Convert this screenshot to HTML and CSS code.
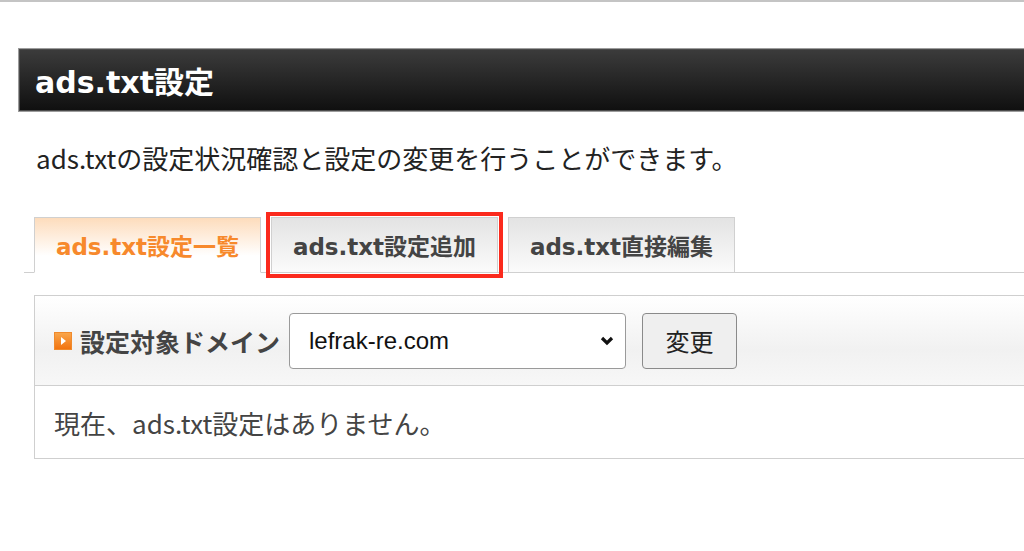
FILE: index.html
```html
<!DOCTYPE html>
<html>
<head lang="ja">
    <meta charset="UTF-8">
    <title>ads.txt設定</title>
    <link rel="stylesheet" href="styles.css">
</head>
<body>
<div class="frame">
    <h1 class="page-title">ads.txt設定</h1>
    <p class="lead">ads.txtの設定状況確認と設定の変更を行うことができます。</p>
    <ul class="tabs">
        <li class="tab active"><a href="javascript:void(0)">ads.txt設定一覧</a></li>
        <li class="tab marked"><a href="javascript:void(0)">ads.txt設定追加</a></li>
        <li class="tab"><a href="javascript:void(0)">ads.txt直接編集</a></li>
    </ul>
    <div class="panel">
        <div class="panel-head">
            <span class="ico"></span>
            <span class="label">設定対象ドメイン</span>
            <div class="select-wrap">
                <select class="domain">
                    <option>lefrak-re.com</option>
                </select>
                <svg class="chevron" width="14" height="10" viewBox="0 0 14 10"><path d="M2 2 L7 7 L12 2" fill="none" stroke="#111" stroke-width="3.2"/></svg>
            </div>
            <button class="btn" type="button">変更</button>
        </div>
        <div class="panel-body">現在、ads.txt設定はありません。</div>
    </div>
</div>
</body>
</html>
```

FILE: styles.css
```css
*{
    margin: 0;
    padding: 0;
    box-sizing: border-box;
}
html, body{
    overflow: hidden;
}
body{
    font-family: "Noto Sans CJK JP", sans-serif;
    color: #222;
    background: #fff;
}
li{
    list-style: none;
}
a{
    text-decoration: none;
}
.frame{
    width: 1040px;
    height: 551px;
    border-top: 2px solid #c4c4c4;
    padding-top: 46px;
}
.page-title{
    margin-left: 18px;
    height: 64px;
    padding-left: 16px;
    display: flex;
    align-items: center;
    border: 1px solid #9c9c9c;
    box-shadow: inset 0 0 0 1px #4a4a4a;
    background: linear-gradient(#3c3c3c, #0f0f0f);
    color: #fff;
    font-family: "DejaVu Sans", "Noto Sans CJK JP", sans-serif;
    font-size: 30px;
    font-weight: bold;
}
.lead{
    margin: 26px 0 0 36px;
    font-size: 26px;
    line-height: 39px;
    color: #222;
}
.tabs{
    margin: 40px 0 0 24px;
    padding-left: 10px;
    display: flex;
    gap: 10px;
    border-bottom: 1px solid #cfcfcf;
}
.tab{
    width: 227px;
    height: 56px;
    margin-bottom: -1px;
    border: 1px solid #d0d0d0;
    background: linear-gradient(#e3e3e3, #fbfbfb);
}
.tab a{
    display: flex;
    height: 100%;
    align-items: center;
    justify-content: center;
    font-family: "DejaVu Sans", "Noto Sans CJK JP", sans-serif;
    font-size: 23px;
    font-weight: bold;
    color: #444;
}
.tab.active{
    border-bottom-color: #fff;
    background: linear-gradient(#fddcbc, #fff 70%);
}
.tab.active a{
    color: #f7892c;
}
.tab.marked{
    outline: 4px solid #fb2a1d;
    outline-offset: 1px;
}
.panel{
    margin: 22px 0 0 34px;
    border: 1px solid #cfcfcf;
}
.panel-head{
    height: 90px;
    padding-left: 19px;
    display: flex;
    align-items: center;
    border-bottom: 1px solid #cfcfcf;
    background: linear-gradient(#fff, #f1f1f1 60%, #f7f7f7);
}
.ico{
    width: 18px;
    height: 18px;
    position: relative;
    background: linear-gradient(#f9a54a, #f27410);
    border: 1px solid #f08a2c;
}
.ico:after{
    content: "";
    position: absolute;
    left: 6px;
    top: 4px;
    border-left: 5px solid #fff;
    border-top: 4px solid transparent;
    border-bottom: 4px solid transparent;
}
.label{
    margin-left: 8px;
    font-size: 25px;
    font-weight: bold;
    color: #444;
}
.select-wrap{
    margin-left: 9px;
    position: relative;
    display: flex;
}
.domain{
    width: 337px;
    height: 56px;
    padding-left: 19px;
    border: 1px solid #9a9a9a;
    border-radius: 4px;
    background: #fff;
    appearance: none;
    -webkit-appearance: none;
    font-family: "Liberation Sans", Arial, sans-serif;
    font-size: 24px;
    color: #111;
}
.chevron{
    position: absolute;
    right: 12px;
    top: 23px;
}
.btn{
    margin-left: 16px;
    width: 95px;
    height: 56px;
    border: 1px solid #8a8a8a;
    border-radius: 4px;
    background: #efefef;
    font-family: "Noto Sans CJK JP", sans-serif;
    font-size: 24px;
    color: #222;
}
.panel-body{
    height: 72px;
    padding-left: 19px;
    display: flex;
    align-items: center;
    font-size: 26px;
    color: #444;
}
```
